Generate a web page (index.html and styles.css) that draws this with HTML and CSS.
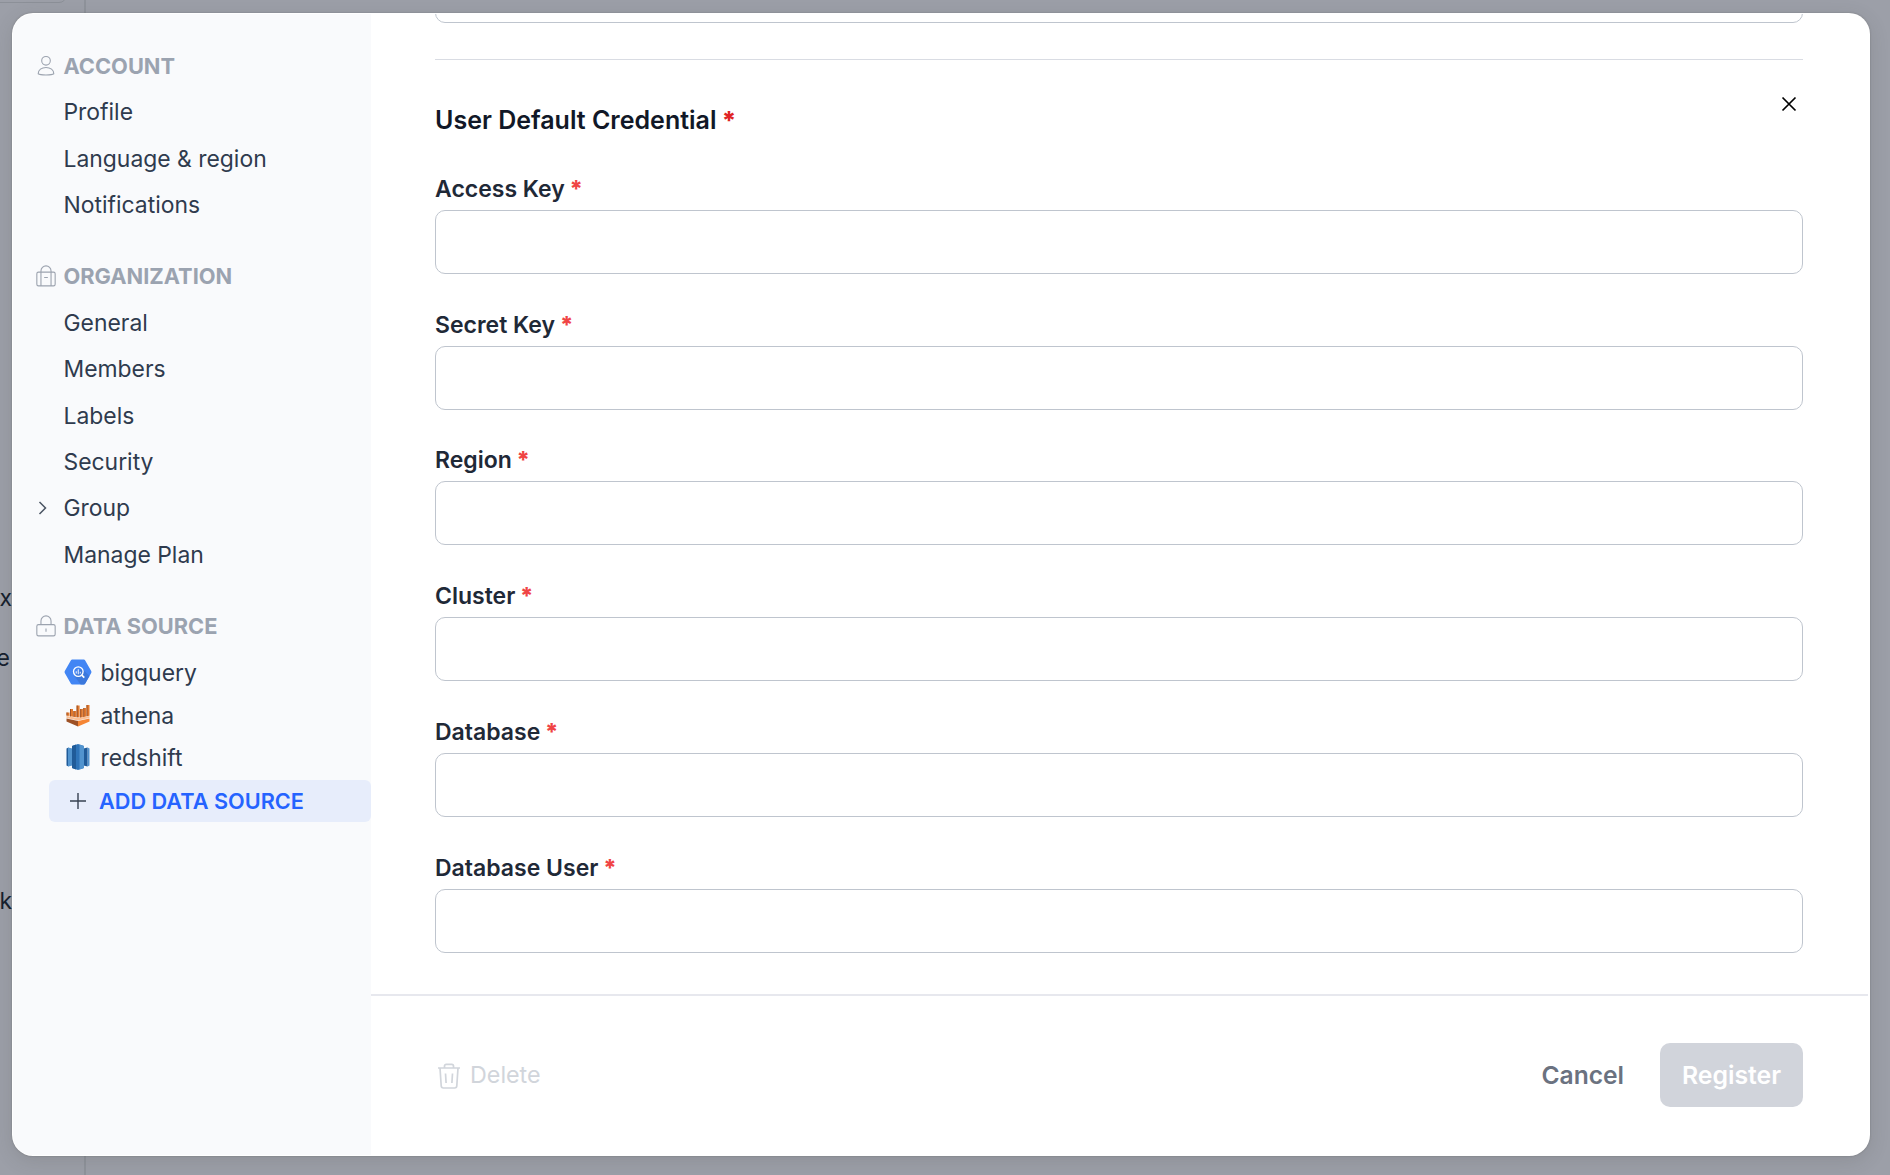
FILE: index.html
```html
<!DOCTYPE html>
<html lang="en">
<head>
<meta charset="utf-8">
<title>Settings</title>
<link rel="stylesheet" href="styles.css">
</head>
<body>
<div class="page-behind">
  <div class="behind-card"></div>
  <div class="behind-line"></div>
  <span class="behind-text behind-x">x</span>
  <span class="behind-text behind-e">e</span>
  <span class="behind-text behind-k">k</span>
</div>
<div class="modal">
  <nav class="sidebar">
    <section class="group">
      <h2 class="group-title">
        <svg class="group-icon" viewBox="0 0 24 24"><circle cx="12" cy="6.3" r="4.700"/><path d="M3.500 20.500c0-4.200 3.700-6.900 8.500-6.900s8.500 2.700 8.500 6.900c-2 1.700-15 1.700-17 0z"/></svg>
        <span>ACCOUNT</span>
      </h2>
      <a class="item">Profile</a>
      <a class="item">Language &amp; region</a>
      <a class="item">Notifications</a>
    </section>
    <section class="group">
      <h2 class="group-title">
        <svg class="group-icon" viewBox="0 0 24 24"><rect x="2" y="7.800" width="20" height="15" rx="1.800"/><path d="M6.500 22.800V6.500a5.500 5.500 0 0 1 11 0V22.800M10 13.700h4"/></svg>
        <span>ORGANIZATION</span>
      </h2>
      <a class="item">General</a>
      <a class="item">Members</a>
      <a class="item">Labels</a>
      <a class="item">Security</a>
      <a class="item"><svg class="chevron" viewBox="0 0 9 14"><path d="M1.500 1L7.500 7 1.500 13"/></svg>Group</a>
      <a class="item">Manage Plan</a>
    </section>
    <section class="group">
      <h2 class="group-title">
        <svg class="group-icon" viewBox="0 0 24 24"><rect x="2" y="10.500" width="20" height="12.300" rx="1.800"/><path d="M6.500 10.500v-4a5.500 5.500 0 0 1 11 0v4M12 14.800v3.400"/></svg>
        <span>DATA SOURCE</span>
      </h2>
      <div class="sources">
        <a class="source">
          <svg class="source-icon" viewBox="0 0 28 28"><path d="M8.300 1.500h11.400a1.800 1.800 0 0 1 1.500.9l6 10.700a1.800 1.800 0 0 1 0 1.800l-6 10.700a1.800 1.800 0 0 1-1.500.9H8.300a1.800 1.800 0 0 1-1.500-.9L.8 14.900a1.800 1.800 0 0 1 0-1.800L6.800 2.400a1.800 1.800 0 0 1 1.500-.9z" fill="#4285f4"/><path d="M18 10.500l7.500 7.500-4.300 7.600a1.800 1.800 0 0 1-1.500.9h-3L10 17.500z" fill="#3b78dc"/><circle cx="14.300" cy="13.600" r="4.800" fill="none" stroke="#fff" stroke-width="1.300"/><path d="M17.800 17.100l2.500 2.500" stroke="#fff" stroke-width="1.700"/><path d="M12.300 13.300v2.200M14.300 11.300v5M16.300 13.800v1.700" stroke="#d5e3fc" stroke-width="1.200"/></svg>
          <span>bigquery</span>
        </a>
        <a class="source">
          <svg class="source-icon" viewBox="0 0 28 28"><path d="M2.500 15L14 17l11.500-2v2L14 19.500l-11.500-2.500z" fill="#fbbf93"/><path d="M2.500 17.500L14 20v5.500L2.500 20.500z" fill="#9d5025"/><path d="M25.500 17.500L14 20v5.500l11.500-5z" fill="#f58534"/><path d="M2.500 11.500h3V15l-3-.4zM6 8h3v7.700l-3-.5zM9.400 10h2.800v6.200l-2.800-.5zM12.600 4.500h3v12l-3-.3zM16.200 8h2.700v8l-2.700.5zM19.300 7h2.700v8.500l-2.700.5zM22.500 4h3v10.700l-3 .6z" fill="#e27a2e"/><path d="M2.500 11.500h1v3.300l-1-.2zM6 8h1v7.400l-1-.2zM9.400 10h1v5.900l-1-.2zM12.600 4.500h1.100v11.700h-1.100zM16.200 8h1v8.300l-1 .2zM19.300 7h1v8.800l-1 .2zM22.500 4h1v11.100l-1 .2z" fill="#9d5025"/></svg>
          <span>athena</span>
        </a>
        <a class="source">
          <svg class="source-icon" viewBox="0 0 28 28"><path d="M2.500 5.500l2-1v19l-2-1z" fill="#205b99"/><path d="M4 4.600l4.500 1v17L4 23.400z" fill="#5294cf"/><path d="M25.500 5.500l-2-1v19l2-1z" fill="#5294cf"/><path d="M19.500 5.500l4-1v19l-4-1z" fill="#205b99"/><path d="M8 3l6-2 6 2v22l-6 2-6-2z" fill="#2e73b8"/><path d="M8 3l4-1.400v24.800L8 25z" fill="#205b99"/><path d="M15.500 1.500L20 3v22l-4.500 1.500z" fill="#5294cf"/></svg>
          <span>redshift</span>
        </a>
        <a class="source add">
          <svg class="plus" viewBox="0 0 18 18"><path d="M9 1v16M1 9h16"/></svg>
          <span>ADD DATA SOURCE</span>
        </a>
      </div>
    </section>
  </nav>
  <main class="content">
    <svg class="close" viewBox="0 0 16 16"><path d="M1.500 1.500l13 13M14.500 1.500l-13 13"/></svg>
    <div class="form">
      <div class="input input-cut"></div>
      <hr class="rule">
      <h1 class="title">User Default Credential <b class="req">*</b></h1>
      <label class="field"><span class="label">Access Key <b class="req">*</b></span><input class="input" type="text"></label>
      <label class="field"><span class="label">Secret Key <b class="req">*</b></span><input class="input" type="text"></label>
      <label class="field"><span class="label">Region <b class="req">*</b></span><input class="input" type="text"></label>
      <label class="field"><span class="label">Cluster <b class="req">*</b></span><input class="input" type="text"></label>
      <label class="field"><span class="label">Database <b class="req">*</b></span><input class="input" type="text"></label>
      <label class="field"><span class="label">Database User <b class="req">*</b></span><input class="input" type="text"></label>
    </div>
    <footer class="footer">
      <button class="delete" disabled>
        <svg class="trash" viewBox="0 0 24 28"><path d="M1 6h22M7.500 6V4a1.700 1.700 0 0 1 1.700-1.700h5.600A1.700 1.700 0 0 1 16.500 4v2M3 6l1.200 17.800A2.200 2.200 0 0 0 6.400 26h11.200a2.200 2.200 0 0 0 2.200-2.200L21 6M8.500 11.500l.6 9.500M15.500 11.500l-.6 9.500"/></svg>
        <span class="delete-label">Delete</span>
      </button>
      <button class="cancel">Cancel</button>
      <button class="register" disabled>Register</button>
    </footer>
  </main>
</div>
</body>
</html>
```
FILE: styles.css
```css
* { box-sizing: border-box; }
body {
  margin: 0;
  width: 1890px;
  height: 1175px;
  overflow: hidden;
  position: relative;
  background: #9c9fa8;
  font-family: Inter, "Liberation Sans", sans-serif;
  color: #2f3b4e;
}
.page-behind { position: absolute; inset: 0; overflow: hidden; }
.behind-card {
  position: absolute; left: -20px; top: -30px; width: 87px; height: 33px;
  border: 1px solid #8c9098; border-radius: 8px;
}
.behind-line { position: absolute; left: 84px; top: 0; bottom: 0; width: 2px; background: #8f939b; }
.behind-text { position: absolute; right: 1878px; font-size: 23px; line-height: 30px; color: #161f2e; }
.behind-x { top: 583px; }
.behind-e { top: 643px; right: 1880px; }
.behind-k { top: 886px; }

.modal {
  position: relative;
  display: flex;
  width: 1857.600px;
  height: 1143px;
  margin: 13px 0 0 12px;
  padding: 1px;
  border-radius: 21px;
  overflow: hidden;
  background: #fff;
  box-shadow: 0 0 2px rgba(60, 60, 60, .35), 0 5px 20px rgba(60, 60, 50, .14);
}
.sidebar {
  width: 358px;
  flex: none;
  padding: 28.200px 0 0 22px;
  background: #f9fafc;
  border-radius: 20px 0 0 20px;
}
.group { margin-bottom: 24.600px; }
.group-title {
  display: flex;
  align-items: center;
  gap: 7px;
  height: 46.900px;
  margin: 0;
  font-size: 21.800px;
  font-weight: 700;
  color: #9ba3b0;
}
.group-icon { width: 22px; height: 24px; margin-left: -.5px; fill: none; stroke: #9ca3af; stroke-width: 1.200; }
.item {
  position: relative;
  display: flex;
  align-items: center;
  height: 46.400px;
  padding-left: 28.500px;
  font-size: 22.900px;
}
.chevron { position: absolute; left: 3px; top: 15.500px; width: 9px; height: 14px; fill: none; stroke: #4b5563; stroke-width: 1.500; }
.sources { padding-top: 2px; }
.source {
  display: flex;
  align-items: center;
  gap: 9px;
  height: 42.700px;
  padding-left: 28.500px;
  font-size: 22.900px;
}
.source-icon { width: 28px; height: 28px; margin-top: -2px; }
.add {
  margin-left: 14px;
  padding-left: 19.500px;
  gap: 12.500px;
  border-radius: 6px;
  background: #e7edfb;
  color: #2563ff;
  font-weight: 600;
  font-size: 21.700px;
}
.plus { width: 18px; height: 18px; fill: none; stroke: #374151; stroke-width: 1.400; }

.content { position: relative; flex: 1; display: flex; flex-direction: column; min-width: 0; }
.close { position: absolute; left: 1410px; top: 82px; width: 16px; height: 16px; fill: none; stroke: #000; stroke-width: 1.700; }
.form { flex: 1; min-height: 0; overflow: hidden; padding: 0 65.600px 0 64px; }
.input {
  display: block;
  width: 100%;
  height: 64px;
  border: 1px solid #bfc5ce;
  border-radius: 10px;
  background: #fff;
}
.input-cut { margin-top: -55px; }
.rule { height: 1px; margin: 36px 0 0; border: 0; background: #d9dce3; }
.title { margin: 42.300px 0 35.600px; font-size: 25px; line-height: 36px; font-weight: 600; color: #111827; }
.req { margin-left: -1px; font-weight: 800; color: #e02424; }
.field { display: block; height: 135.800px; }
.label { display: block; height: 36px; line-height: 30px; font-size: 23px; font-weight: 600; color: #1f2937; }
.label .req { color: #f04444; }
.footer {
  display: flex;
  align-items: center;
  height: 161px;
  margin-right: 1px;
  padding: 0 64.600px 2px 66px;
  border-top: 2px solid #e7e8ee;
}
.footer button { border: 0; background: none; padding: 0; font: 600 25px Inter, sans-serif; }
.footer .delete { display: flex; align-items: center; gap: 9px; margin: 2px auto 0 0; font-weight: 400; font-size: 23.300px; color: #d1d5db; }
.trash { width: 24px; height: 28px; fill: none; stroke: #d1d5db; stroke-width: 1.700; }
.delete-label { position: relative; top: -1px; }
.footer .cancel { margin-right: 36px; font-size: 24.600px; color: #6b7280; }
.footer .register { width: 143px; height: 64px; border-radius: 10px; background: #d1d4db; font-size: 24.800px; color: #fff; }
```
